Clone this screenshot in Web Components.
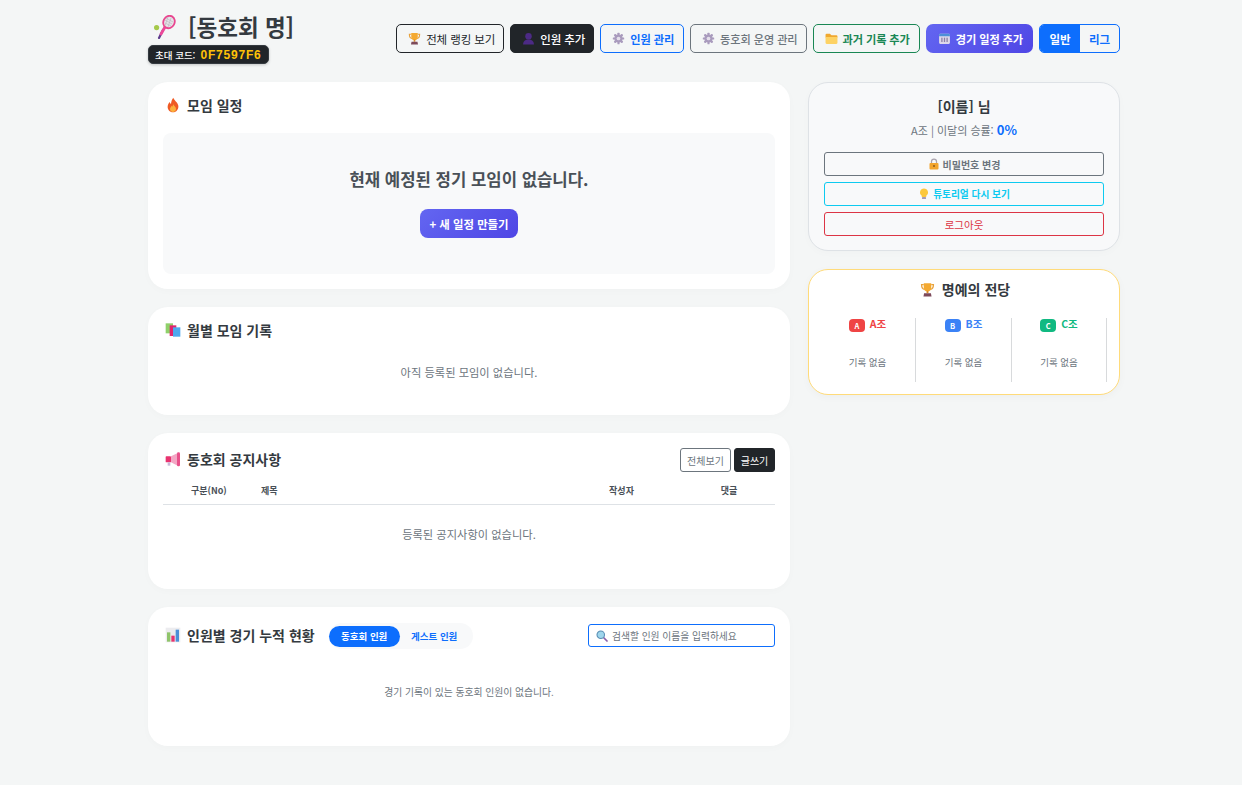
<!DOCTYPE html>
<html lang="ko">
<head>
<meta charset="utf-8">
<title>동호회</title>
<style>
html, body { margin: 0; padding: 0; background: #f4f6f6; }
body { font-family: "Noto Sans CJK KR", "Noto Sans", sans-serif; color: #212529; }
</style>
</head>
<body>
<club-page>
	<club-header slot="header"></club-header>

	<club-card slot="main" icon="fire" heading="모임 일정" style="--head-h:16px;--head-gap:20px;">
		<schedule-empty></schedule-empty>
	</club-card>

	<club-card slot="main" icon="books" heading="월별 모임 기록" style="--head-h:16px;--head-gap:0px;">
		<empty-text style="--top:26px;--bottom:20px;--size:11.25px;">아직 등록된 모임이 없습니다.</empty-text>
	</club-card>

	<club-card slot="main" icon="megaphone" heading="동호회 공지사항" style="--head-h:24px;--head-gap:7px;--title-lift:3px;">
		<small-btn slot="tools" kind="outline">전체보기</small-btn>
		<small-btn slot="tools" kind="dark">글쓰기</small-btn>
		<notice-table></notice-table>
	</club-card>

	<club-card slot="main" icon="chart" heading="인원별 경기 누적 현황" style="--head-h:26px;--head-gap:0px;--pad-top:16px;--title-lift:2px;">
		<member-tabs slot="after"></member-tabs>
		<search-box slot="tools"></search-box>
		<empty-text style="--top:35px;--bottom:31px;--size:9.8px;">경기 기록이 있는 동호회 인원이 없습니다.</empty-text>
	</club-card>

	<user-card slot="side"></user-card>
	<honor-card slot="side"></honor-card>
</club-page>

<script>
const ICONS = {
	racket: `<svg viewBox="0 0 24 24"><circle cx="3.6" cy="12.6" r="2.6" fill="#a5c94b"/><path d="M10 15 L6 23" stroke="#5b3a8c" stroke-width="2.2" stroke-linecap="round"/><path d="M12.6 11 L8 19" stroke="#ec4899" stroke-width="2.8" stroke-linecap="round"/><ellipse cx="16" cy="7" rx="5.6" ry="6.4" transform="rotate(28 16 7)" fill="#e5e3e8" stroke="#e8468f" stroke-width="1.8"/><path d="M12 5l7 4M13 3l7 4M12 8l6 3M15 2l-3 9M18 3l-3 9" stroke="#b8b4bc" stroke-width=".6"/></svg>`,
	trophy: `<svg viewBox="0 0 24 24"><path d="M6 4H2.5c0 5 2 7.5 5 8M18 4h3.5c0 5-2 7.5-5 8" fill="none" stroke="#e8a13a" stroke-width="2"/><path d="M6 2h12v7c0 4-2.5 6-6 6s-6-2-6-6z" fill="#f4a930"/><rect x="10.5" y="14" width="3" height="4" fill="#d98a26"/><path d="M6.500 18h11l1 5h-13z" fill="#7d4a5a"/></svg>`,
	person: `<svg viewBox="0 0 24 24"><circle cx="12" cy="8" r="6" fill="#4c2a85"/><path d="M2 23c0-6 4-9 10-9s10 3 10 9z" fill="#4c2a85"/></svg>`,
	gear: `<svg viewBox="0 0 24 24"><g fill="#a99bbd"><circle cx="12" cy="12" r="7.500"/><rect x="10" y="1.500" width="4" height="21" rx="1"/><rect x="10" y="1.500" width="4" height="21" rx="1" transform="rotate(45 12 12)"/><rect x="10" y="1.500" width="4" height="21" rx="1" transform="rotate(90 12 12)"/><rect x="10" y="1.500" width="4" height="21" rx="1" transform="rotate(135 12 12)"/></g><circle cx="12" cy="12" r="3.400" fill="#e4dfea"/></svg>`,
	folder: `<svg viewBox="0 0 24 24"><path d="M1 5a2 2 0 0 1 2-2h6l3 3h9a2 2 0 0 1 2 2v2H1z" fill="#f0a830"/><path d="M1 9h22v11a2 2 0 0 1-2 2H3a2 2 0 0 1-2-2z" fill="#fdd264"/></svg>`,
	calendar: `<svg viewBox="0 0 24 24"><rect x="2" y="3" width="20" height="19" rx="2" fill="#ddd8ea"/><path d="M2 5a2 2 0 0 1 2-2h16a2 2 0 0 1 2 2v3H2z" fill="#4d8fd8"/><g fill="#8c7fa6"><rect x="6" y="10.500" width="2.400" height="8"/><rect x="10.800" y="10.500" width="2.400" height="8"/><rect x="15.600" y="10.500" width="2.400" height="8"/></g></svg>`,
	fire: `<svg viewBox="0 0 24 24"><path d="M12.500 1c1 4 6.500 6.500 7.500 12 .7 5-3 10-8 10s-8.500-4-8-9c.2-3 2-5 3-6.500.5 1.500 1 2.500 2 3 .3-4 1.500-7 3.500-9.500z" fill="#ef5a24"/><path d="M12.500 11c1 2.500 4 4 4 7 0 2.500-2 4.500-4.500 4.500S7.500 20.500 7.500 18c0-2.500 2-3.500 2.500-5 .5.500 1 1 1.200 1.500.2-1 .5-2.500 1.300-3.500z" fill="#fbb03b"/></svg>`,
	books: `<svg viewBox="0 0 24 24"><rect x="1" y="2" width="11" height="15" fill="#8fd16a"/><rect x="7" y="5" width="10" height="16" fill="#e0246c"/><rect x="12" y="8" width="11" height="14" fill="#4ea9ee"/></svg>`,
	megaphone: `<svg viewBox="0 0 24 24"><rect x="1" y="8" width="8" height="9" rx="1" fill="#e8336f"/><path d="M9 8l10-5v19L9 17z" fill="#f3a6c4"/><rect x="18" y="2" width="4.500" height="21" rx="2" fill="#e8508a"/><rect x="4" y="17" width="4" height="5" fill="#c9b8d8"/></svg>`,
	chart: `<svg viewBox="0 0 24 24"><rect x="1" y="1" width="22" height="22" fill="#ececef"/><rect x="3" y="8" width="5" height="14" fill="#8fc46a"/><rect x="9.500" y="13" width="5" height="9" fill="#e8336f"/><rect x="16" y="4" width="5" height="18" fill="#4c8fd8"/></svg>`,
	lock: `<svg viewBox="0 0 24 24"><path d="M7 11V7a5 5 0 0 1 10 0v4" fill="none" stroke="#a9a3ad" stroke-width="2.500"/><rect x="3" y="10" width="18" height="13" rx="2" fill="#f2a52e"/><circle cx="12" cy="16" r="2" fill="#8a5a20"/></svg>`,
	bulb: `<svg viewBox="0 0 24 24"><path d="M12 1a8 8 0 0 0-4.500 14.600V18h9v-2.400A8 8 0 0 0 12 1z" fill="#fcc83c"/><rect x="8" y="18" width="8" height="4" rx="1" fill="#a89bb4"/></svg>`,
	search: `<svg viewBox="0 0 24 24"><path d="M14 14l8 8" stroke="#8a5fa8" stroke-width="3.500" stroke-linecap="round"/><circle cx="9.500" cy="9.500" r="7.500" fill="#9fd6ec" stroke="#5a8fb5" stroke-width="2.200"/></svg>`
};

class EmojiIcon extends HTMLElement {
	constructor() {
		super();
		const size = this.getAttribute('size') || 12;
		this.attachShadow({mode: 'open'}).innerHTML = `
<style>
:host { display: inline-flex; flex: none; width: ${size}px; height: ${size}px; }
svg { width: 100%; height: 100%; display: block; }
</style>${ICONS[this.getAttribute('name')] || ''}`;
	}
}
customElements.define('emoji-icon', EmojiIcon);

class ClubPage extends HTMLElement {
	constructor() {
		super();
		this.attachShadow({mode: 'open'}).innerHTML = `
<style>
:host { display: block; width: 972px; margin: 0 0 0 148px; padding: 0 0 39px; }
.cols { display: grid; grid-template-columns: 642px 312px; column-gap: 18px; align-items: start; }
.col { display: flex; flex-direction: column; gap: 18px; }
</style>
<slot name="header"></slot>
<div class="cols">
	<div class="col"><slot name="main"></slot></div>
	<div class="col"><slot name="side"></slot></div>
</div>`;
	}
}
customElements.define('club-page', ClubPage);

class TopButton extends HTMLElement {
	constructor() {
		super();
		const icon = this.getAttribute('icon');
		this.attachShadow({mode: 'open'}).innerHTML = `
<style>
:host { display: inline-flex; align-items: center; justify-content: center; gap: 5px; box-sizing: border-box; height: 29px; padding: 0 8px 0 11px; border: 1px solid var(--c, #212529); border-radius: 5px; font-size: 11.5px; font-weight: 400; color: var(--c, #212529); white-space: nowrap; background: transparent; letter-spacing: -.1px; }
:host([kind="black"]) { background: #212529; color: #fff; border-color: #212529; font-weight: 500; }
:host([kind="blue"]) { --c: #0d6efd; font-weight: 700; font-size: 11.2px; padding-right: 9px; }
:host([kind="gray"]) { --c: #6c757d; font-weight: 500; font-size: 11.2px; }
:host([kind="green"]) { --c: #198754; font-weight: 700; font-size: 11.2px; padding-right: 9px; }
:host([kind="violet"]) { background: linear-gradient(135deg, #6366f1, #4f46e5); color: #fff; border: 0; font-weight: 700; font-size: 11.2px; border-radius: 7px; padding: 0 10px 0 12px; }
</style>
${icon ? `<emoji-icon name="${icon}" size="13"></emoji-icon>` : ''}<slot></slot>`;
	}
}
customElements.define('top-button', TopButton);

class ClubHeader extends HTMLElement {
	constructor() {
		super();
		this.attachShadow({mode: 'open'}).innerHTML = `
<style>
:host { display: flex; justify-content: space-between; align-items: flex-start; height: 82px; box-sizing: border-box; padding-top: 13px; }
.brand { display: flex; flex-direction: column; align-items: flex-start; }
h1 { margin: 0; height: 27px; padding-left: 5px; display: flex; align-items: center; gap: 11px; font-size: 22.5px; font-weight: 700; line-height: 27px; color: #343a40; white-space: nowrap; }
.code { margin-top: 5px; display: inline-flex; align-items: center; gap: 5px; box-sizing: border-box; height: 19px; width: 121px; padding: 0 6px; background: #212529; border-radius: 5px; border: 1px solid #343a40; font-size: 9.5px; font-weight: 500; color: #fff; white-space: nowrap; box-shadow: 0 1px 3px rgba(0,0,0,.2); }
.code b { font-family: "Liberation Sans", "Noto Sans", sans-serif; font-size: 12px; font-weight: 700; letter-spacing: .8px; color: #ffc107; }
nav { display: flex; gap: 6px; padding-top: 11px; }
.mode { display: flex; box-sizing: border-box; width: 81px; height: 29px; border: 1px solid #0d6efd; border-radius: 5px; overflow: hidden; font-size: 11.500px; font-weight: 700; }
.mode span { display: flex; align-items: center; justify-content: center; }
.mode .on { flex: 0 0 40px; background: #0d6efd; color: #fff; }
.mode .off { flex: 1; color: #0d6efd; }
</style>
<div class="brand">
	<h1><emoji-icon name="racket" size="24"></emoji-icon><span>[동호회 명]</span></h1>
	<div class="code"><span>초대 코드:</span><b>0F7597F6</b></div>
</div>
<nav>
	<top-button icon="trophy">전체 랭킹 보기</top-button>
	<top-button icon="person" kind="black">인원 추가</top-button>
	<top-button icon="gear" kind="blue">인원 관리</top-button>
	<top-button icon="gear" kind="gray">동호회 운영 관리</top-button>
	<top-button icon="folder" kind="green">과거 기록 추가</top-button>
	<top-button icon="calendar" kind="violet">경기 일정 추가</top-button>
	<div class="mode"><span class="on">일반</span><span class="off">리그</span></div>
</nav>`;
	}
}
customElements.define('club-header', ClubHeader);

class ClubCard extends HTMLElement {
	constructor() {
		super();
		this.attachShadow({mode: 'open'}).innerHTML = `
<style>
:host { display: block; box-sizing: border-box; background: #fff; border-radius: 20px; padding: var(--pad-top, 15px) 15px 15px; box-shadow: 0 2px 8px rgba(0,0,0,.02); }
header { display: flex; align-items: center; height: var(--head-h, 16px); margin-bottom: var(--head-gap, 0); }
h2 { margin: 0; padding: 0 0 var(--title-lift, 0) 2px; display: flex; align-items: center; gap: 6px; font-size: 14px; font-weight: 700; line-height: 16px; color: #343a40; white-space: nowrap; }
.after { margin-left: 14px; display: flex; }
.tools { margin-left: auto; display: flex; gap: 3px; }
</style>
<header>
	<h2><emoji-icon name="${this.getAttribute('icon')}" size="16"></emoji-icon>${this.getAttribute('heading')}</h2>
	<div class="after"><slot name="after"></slot></div>
	<div class="tools"><slot name="tools"></slot></div>
</header>
<slot></slot>`;
	}
}
customElements.define('club-card', ClubCard);

class ScheduleEmpty extends HTMLElement {
	constructor() {
		super();
		this.attachShadow({mode: 'open'}).innerHTML = `
<style>
:host { display: flex; flex-direction: column; align-items: center; height: 141px; box-sizing: border-box; padding-top: 33px; background: #f8f9fa; border-radius: 8px; }
p { margin: 0; font-size: 16.7px; font-weight: 700; line-height: 26px; color: #495057; white-space: nowrap; }
span { margin-top: 17px; display: flex; align-items: center; justify-content: center; width: 98px; height: 29px; border-radius: 8px; background: linear-gradient(135deg, #6366f1, #4f46e5); color: #fff; font-size: 11.4px; font-weight: 700; }
</style>
<p>현재 예정된 정기 모임이 없습니다.</p>
<span>+ 새 일정 만들기</span>`;
	}
}
customElements.define('schedule-empty', ScheduleEmpty);

class EmptyText extends HTMLElement {
	constructor() {
		super();
		this.attachShadow({mode: 'open'}).innerHTML = `
<style>
:host { display: block; padding: var(--top, 20px) 0 var(--bottom, 20px); text-align: center; font-size: var(--size, 11.25px); line-height: 16px; color: #6c757d; white-space: nowrap; }
</style><slot></slot>`;
	}
}
customElements.define('empty-text', EmptyText);

class SmallBtn extends HTMLElement {
	constructor() {
		super();
		this.attachShadow({mode: 'open'}).innerHTML = `
<style>
:host { display: inline-flex; align-items: center; justify-content: center; box-sizing: border-box; height: 24px; width: 51px; border-radius: 3px; font-size: 10px; white-space: nowrap; border: 1px solid #6c757d; color: #6c757d; }
:host([kind="dark"]) { width: 41px; background: #212529; border-color: #212529; color: #fff; }
</style><slot></slot>`;
	}
}
customElements.define('small-btn', SmallBtn);

class NoticeTable extends HTMLElement {
	constructor() {
		super();
		this.attachShadow({mode: 'open'}).innerHTML = `
<style>
:host { display: block; }
.head { display: grid; grid-template-columns: 90px 307px 123px 92px; height: 26px; align-items: center; border-bottom: 1px solid #dee2e6; box-sizing: border-box; font-size: 9px; font-weight: 700; color: #495057; padding-bottom: 2px; }
.head span { white-space: nowrap; }
.no { padding-left: 28px; }
.title { padding-left: 8px; }
.c { text-align: center; }
</style>
<div class="head"><span class="no">구분(No)</span><span class="title">제목</span><span class="c">작성자</span><span class="c">댓글</span></div>
<empty-text style="--top:21px;--bottom:32px;--size:11.25px;">등록된 공지사항이 없습니다.</empty-text>`;
	}
}
customElements.define('notice-table', NoticeTable);

class MemberTabs extends HTMLElement {
	constructor() {
		super();
		this.attachShadow({mode: 'open'}).innerHTML = `
<style>
:host { display: flex; align-items: center; box-sizing: border-box; width: 144px; height: 26px; padding: 2px 0; border-radius: 13px; background: #f8f9fa; font-size: 9.500px; font-weight: 700; white-space: nowrap; }
span { display: flex; align-items: center; justify-content: center; height: 21px; border-radius: 11px; }
.on { width: 71px; background: #0d6efd; color: #fff; }
.off { width: 69px; color: #0d6efd; }
</style>
<span class="on">동호회 인원</span><span class="off">게스트 인원</span>`;
	}
}
customElements.define('member-tabs', MemberTabs);

class SearchBox extends HTMLElement {
	constructor() {
		super();
		this.attachShadow({mode: 'open'}).innerHTML = `
<style>
:host { display: flex; align-items: center; gap: 4px; box-sizing: border-box; width: 187px; height: 23px; padding: 0 7px; border: 1px solid #0d6efd; border-radius: 3px; background: #fff; font-size: 9.75px; color: #6c757d; white-space: nowrap; margin-bottom: 1px; }
</style>
<emoji-icon name="search" size="12"></emoji-icon><span>검색할 인원 이름을 입력하세요</span>`;
	}
}
customElements.define('search-box', SearchBox);

class UserCard extends HTMLElement {
	constructor() {
		super();
		this.attachShadow({mode: 'open'}).innerHTML = `
<style>
:host { display: block; box-sizing: border-box; height: 169px; padding: 13px 15px 0; background: #f8f9fa; border: 1px solid #dee2e6; border-radius: 20px; text-align: center; box-shadow: 0 2px 8px rgba(0,0,0,.02); }
h3 { margin: 0; font-size: 14px; font-weight: 700; line-height: 20px; color: #343a40; }
p { margin: 5px 0 13px; font-size: 11px; line-height: 18px; color: #6c757d; }
p b { font-size: 13px; font-weight: 700; color: #0d6efd; }
.btns { display: flex; flex-direction: column; gap: 6px; }
.btn { display: flex; align-items: center; justify-content: center; gap: 3px; box-sizing: border-box; height: 24px; border: 1px solid; border-radius: 3px; font-size: 9.7px; font-weight: 700; }
.gray { color: #6c757d; border-color: #6c757d; font-size: 10px; }
.cyan { color: #0dcaf0; border-color: #0dcaf0; }
.red { color: #dc3545; border-color: #dc3545; font-weight: 400; font-size: 10.500px; }
</style>
<h3>[이름] 님</h3>
<p>A조 | 이달의 승률: <b>0%</b></p>
<div class="btns">
	<div class="btn gray"><emoji-icon name="lock" size="12"></emoji-icon>비밀번호 변경</div>
	<div class="btn cyan"><emoji-icon name="bulb" size="12"></emoji-icon>튜토리얼 다시 보기</div>
	<div class="btn red">로그아웃</div>
</div>`;
	}
}
customElements.define('user-card', UserCard);

class HonorColumn extends HTMLElement {
	constructor() {
		super();
		const team = this.getAttribute('team');
		this.attachShadow({mode: 'open'}).innerHTML = `
<style>
:host { display: flex; flex-direction: column; align-items: center; box-sizing: border-box; height: 64px; border-right: 1px solid #d8dadc; }
.top { display: flex; align-items: flex-start; gap: 5px; height: 15px; }
.badge { display: flex; align-items: center; justify-content: center; width: 16px; height: 13px; margin-top: 1px; border-radius: 4px; background: var(--team); color: #fff; font-size: 7.500px; font-weight: 700; }
.name { font-size: 10.500px; font-weight: 700; line-height: 11px; color: var(--team); }
.none { margin-top: 22px; font-size: 9.500px; line-height: 14px; color: #6c757d; }
</style>
<div class="top"><span class="badge">${team}</span><span class="name">${team}조</span></div>
<div class="none">기록 없음</div>`;
	}
}
customElements.define('honor-column', HonorColumn);

class HonorCard extends HTMLElement {
	constructor() {
		super();
		this.attachShadow({mode: 'open'}).innerHTML = `
<style>
:host { display: block; box-sizing: border-box; height: 126px; padding: 10px 12px 0 11px; background: #fff; border: 1px solid #ffdb7a; border-radius: 20px; box-shadow: 0 2px 8px rgba(0,0,0,.03); }
h3 { margin: 0 0 20px 3px; display: flex; align-items: center; justify-content: center; gap: 7px; height: 18px; font-size: 14px; font-weight: 700; color: #343a40; }
.cols { display: grid; grid-template-columns: 96px 96px 95px; }
</style>
<h3><emoji-icon name="trophy" size="15"></emoji-icon>명예의 전당</h3>
<div class="cols">
	<honor-column team="A" style="--team:#ef4444"></honor-column>
	<honor-column team="B" style="--team:#3b82f6"></honor-column>
	<honor-column team="C" style="--team:#10b981"></honor-column>
</div>`;
	}
}
customElements.define('honor-card', HonorCard);
</script>
</body>
</html>
